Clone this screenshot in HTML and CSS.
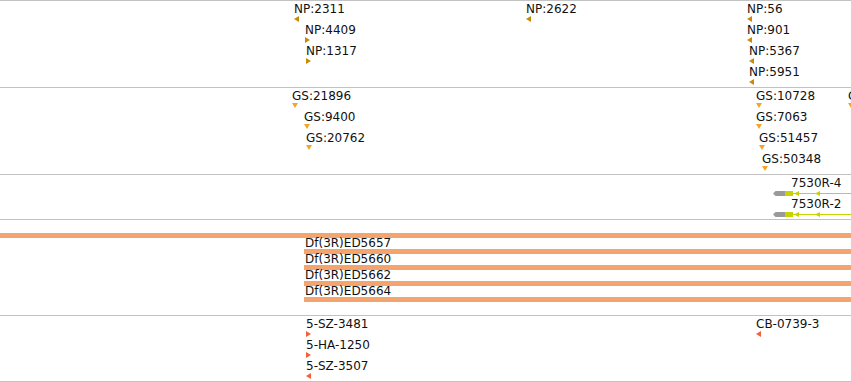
FILE: index.html
```html
<!DOCTYPE html>
<html>
<head>
<meta charset="utf-8">
<link rel="stylesheet" href="styles.css">
</head>
<body>
<div class="view">
  <div class="track t-np">
    <div class="feat np" style="left:294px;top:1px"><div class="lbl">NP:2311</div><div class="mk left"></div></div>
    <div class="feat np" style="left:305px;top:22px"><div class="lbl">NP:4409</div><div class="mk right"></div></div>
    <div class="feat np" style="left:306px;top:43px"><div class="lbl">NP:1317</div><div class="mk right"></div></div>
    <div class="feat np" style="left:526px;top:1px"><div class="lbl">NP:2622</div><div class="mk left"></div></div>
    <div class="feat np" style="left:747px;top:1px"><div class="lbl">NP:56</div><div class="mk left"></div></div>
    <div class="feat np" style="left:747px;top:22px"><div class="lbl">NP:901</div><div class="mk left"></div></div>
    <div class="feat np" style="left:749px;top:43px"><div class="lbl">NP:5367</div><div class="mk left"></div></div>
    <div class="feat np" style="left:749px;top:64px"><div class="lbl">NP:5951</div><div class="mk left"></div></div>
  </div>
  <div class="track t-gs">
    <div class="feat gs" style="left:292px;top:1px"><div class="lbl">GS:21896</div><div class="mk down"></div></div>
    <div class="feat gs" style="left:304px;top:22px"><div class="lbl">GS:9400</div><div class="mk down"></div></div>
    <div class="feat gs" style="left:306px;top:43px"><div class="lbl">GS:20762</div><div class="mk down"></div></div>
    <div class="feat gs" style="left:756px;top:1px"><div class="lbl">GS:10728</div><div class="mk down"></div></div>
    <div class="feat gs" style="left:756px;top:22px"><div class="lbl">GS:7063</div><div class="mk down"></div></div>
    <div class="feat gs" style="left:759px;top:43px"><div class="lbl">GS:51457</div><div class="mk down"></div></div>
    <div class="feat gs" style="left:762px;top:64px"><div class="lbl">GS:50348</div><div class="mk down"></div></div>
    <div class="feat gs" style="left:848px;top:1px"><div class="lbl">G</div><div class="mk down"></div></div>
  </div>
  <div class="track t-gene">
    <div class="gene" style="left:772px;top:1px">
      <div class="lbl glbl">7530R-4</div>
      <svg class="gglyph" width="79" height="7" viewBox="0 0 79 7">
        <line x1="21" y1="3.5" x2="79" y2="3.5" stroke="#c5d300" stroke-width="1"/>
        <path d="M1 3.5 L3.5 1 L13 1 L13 6 L3.5 6 Z" fill="#9a9a9a"/>
        <rect x="13" y="1" width="8" height="5" fill="#c5d300"/>
        <path d="M22 3.5 L27 1 L27 6 Z" fill="#c5d300"/>
        <path d="M43 3.5 L48 1 L48 6 Z" fill="#c5d300"/>
      </svg>
    </div>
    <div class="gene" style="left:772px;top:22px">
      <div class="lbl glbl">7530R-2</div>
      <svg class="gglyph" width="79" height="7" viewBox="0 0 79 7">
        <line x1="21" y1="3.5" x2="79" y2="3.5" stroke="#c5d300" stroke-width="1"/>
        <path d="M1 3.5 L3.5 1 L13 1 L13 6 L3.5 6 Z" fill="#9a9a9a"/>
        <rect x="13" y="1" width="8" height="5" fill="#c5d300"/>
        <path d="M22 3.5 L27 1 L27 6 Z" fill="#c5d300"/>
        <path d="M43 3.5 L48 1 L48 6 Z" fill="#c5d300"/>
      </svg>
    </div>
  </div>
  <div class="track t-df">
    <div class="bar" style="left:0;top:13px"></div>
    <div class="dlbl" style="left:305px;top:18px">Df(3R)ED5657</div>
    <div class="bar" style="left:304px;top:29px"></div>
    <div class="dlbl" style="left:305px;top:34px">Df(3R)ED5660</div>
    <div class="bar" style="left:304px;top:45px"></div>
    <div class="dlbl" style="left:305px;top:50px">Df(3R)ED5662</div>
    <div class="bar" style="left:304px;top:61px"></div>
    <div class="dlbl" style="left:305px;top:66px">Df(3R)ED5664</div>
    <div class="bar" style="left:304px;top:77px"></div>
  </div>
  <div class="track t-sz">
    <div class="feat sz" style="left:306px;top:1px"><div class="lbl">5-SZ-3481</div><div class="mk right"></div></div>
    <div class="feat sz" style="left:306px;top:22px"><div class="lbl">5-HA-1250</div><div class="mk right"></div></div>
    <div class="feat sz" style="left:306px;top:43px"><div class="lbl">5-SZ-3507</div><div class="mk left"></div></div>
    <div class="feat sz" style="left:756px;top:1px"><div class="lbl">CB-0739-3</div><div class="mk left"></div></div>
  </div>
  <div class="track t-end"></div>
</div>
</body>
</html>
```
FILE: styles.css
```css
html, body {
  margin: 0;
  padding: 0;
  background: #fff;
}
body {
  width: 851px;
  height: 382px;
  overflow: hidden;
  font-family: "DejaVu Sans", Verdana, sans-serif;
  font-size: 12px;
  color: #111;
}
.view {
  display: flex;
  flex-direction: column;
  width: 851px;
}
.track {
  position: relative;
  border-top: 1px solid #c2c2c2;
  overflow: hidden;
  flex: none;
}
.t-np { height: 86px; }
.t-gs { height: 86px; }
.t-gene { height: 44px; }
.t-df { height: 95px; }
.t-sz { height: 65px; }
.t-end { height: 1px; }

.feat, .gene {
  position: absolute;
  display: flex;
  flex-direction: column;
  align-items: flex-start;
}
.lbl {
  line-height: 14px;
  white-space: nowrap;
}
.mk {
  width: 0;
  height: 0;
  border-style: solid;
}
.mk.left {
  border-width: 3px 5px 3px 0;
  border-color: transparent var(--c) transparent transparent;
}
.mk.right {
  border-width: 3px 0 3px 5px;
  border-color: transparent transparent transparent var(--c);
}
.mk.down {
  border-width: 5px 3px 0 3px;
  border-color: var(--c) transparent transparent transparent;
}
.np { --c: #c98a06; }
.gs { --c: #f3a52a; }
.sz { --c: #f2603c; }

.glbl {
  margin-left: 19px;
}
.gglyph {
  display: block;
}
.bar {
  position: absolute;
  right: 0;
  height: 5px;
  background: #f4a46e;
}
.dlbl {
  position: absolute;
  line-height: 11px;
  white-space: nowrap;
}
```
